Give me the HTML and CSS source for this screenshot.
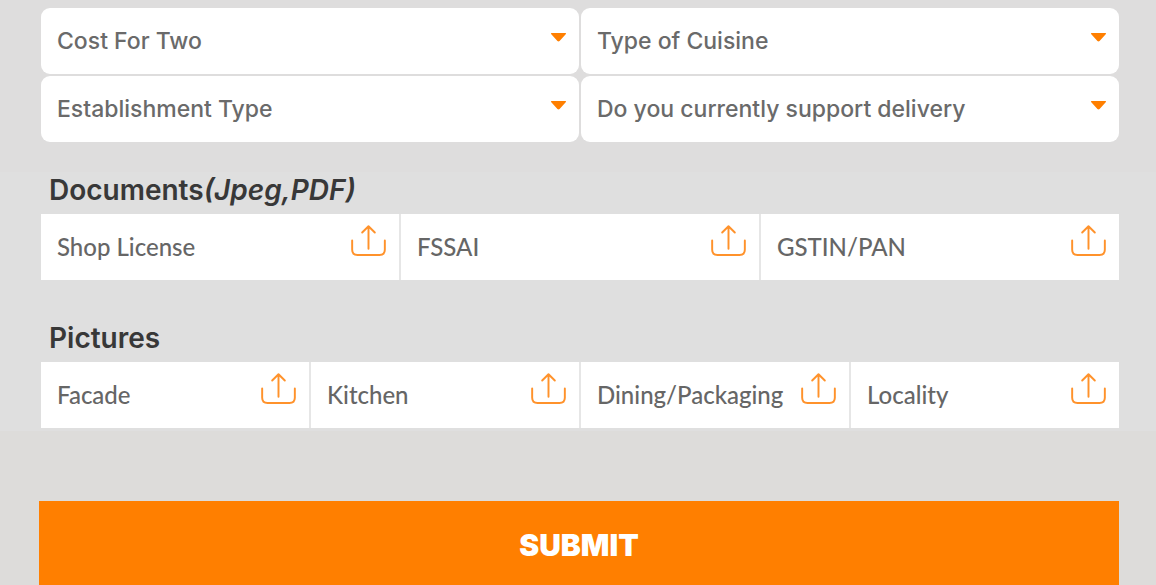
FILE: index.html
```html
<!DOCTYPE html>
<html lang="en">
<head>
<meta charset="utf-8">
<meta name="viewport" content="width=device-width, initial-scale=1">
<title>Restaurant registration</title>
<link rel="stylesheet" href="styles.css">
</head>
<body>
<svg class="sprite" aria-hidden="true">
  <symbol id="upload" viewBox="0 0 36 34">
    <path d="M1.2 16.4V26Q1.2 31.4 6.8 31.4H29.2Q34.8 31.4 34.8 26V16.4" />
    <path d="M18 25V2M11.5 8.3L18 1.8L24.5 8.3" />
  </symbol>
  <symbol id="caret" viewBox="0 0 18 10">
    <path d="M1.2 0H16.8Q18 .4 17 1.4L10.2 9Q9 10 7.8 9L1 1.4Q0 .4 1.2 0Z" />
  </symbol>
</svg>
<form class="form">
  <div class="details">
    <div class="choices">
      <div class="choice">
        <select class="select" aria-label="Cost For Two"><option>Cost For Two</option></select>
        <svg class="caret" aria-hidden="true"><use href="#caret"/></svg>
      </div>
      <div class="choice">
        <select class="select" aria-label="Type of Cuisine"><option>Type of Cuisine</option></select>
        <svg class="caret" aria-hidden="true"><use href="#caret"/></svg>
      </div>
      <div class="choice">
        <select class="select" aria-label="Establishment Type"><option>Establishment Type</option></select>
        <svg class="caret" aria-hidden="true"><use href="#caret"/></svg>
      </div>
      <div class="choice">
        <select class="select" aria-label="Do you currently support delivery"><option>Do you currently support delivery</option></select>
        <svg class="caret" aria-hidden="true"><use href="#caret"/></svg>
      </div>
    </div>
  </div>
  <div class="files">
    <section class="group">
      <h2 class="heading">Documents<em>(Jpeg,PDF)</em></h2>
      <div class="uploads">
        <label class="upload"><span>Shop License</span><input class="file" type="file"><svg class="icon" aria-hidden="true"><use href="#upload"/></svg></label>
        <label class="upload"><span>FSSAI</span><input class="file" type="file"><svg class="icon" aria-hidden="true"><use href="#upload"/></svg></label>
        <label class="upload"><span>GSTIN/PAN</span><input class="file" type="file"><svg class="icon" aria-hidden="true"><use href="#upload"/></svg></label>
      </div>
    </section>
    <section class="group">
      <h2 class="heading">Pictures</h2>
      <div class="uploads">
        <label class="upload"><span>Facade</span><input class="file" type="file"><svg class="icon" aria-hidden="true"><use href="#upload"/></svg></label>
        <label class="upload"><span>Kitchen</span><input class="file" type="file"><svg class="icon" aria-hidden="true"><use href="#upload"/></svg></label>
        <label class="upload"><span>Dining/Packaging</span><input class="file" type="file"><svg class="icon" aria-hidden="true"><use href="#upload"/></svg></label>
        <label class="upload"><span>Locality</span><input class="file" type="file"><svg class="icon" aria-hidden="true"><use href="#upload"/></svg></label>
      </div>
    </section>
  </div>
  <div class="footer">
    <button class="submit" type="button">SUBMIT</button>
  </div>
</form>
</body>
</html>
```
FILE: styles.css
```css
* {
  box-sizing: border-box;
}

body {
  margin: 0;
  background: #dddcda;
  font-family: Inter, "Liberation Sans", sans-serif;
  color: #666;
}

.sprite {
  display: none;
}

.details {
  padding: 8px 37px 30px 41px;
  background: #dedddd;
}

.choices {
  display: grid;
  grid-template-columns: repeat(2, minmax(0, 1fr));
  gap: 2px;
}

.choice {
  position: relative;
}

.select {
  display: block;
  width: 100%;
  height: 66px;
  padding: 0 50px 0 16px;
  border: 0;
  border-radius: 9px;
  appearance: none;
  background: #fff;
  color: #6a6a6a;
  font: 500 23px Inter, "Liberation Sans", sans-serif;
}

.caret {
  position: absolute;
  top: 25px;
  right: 12px;
  width: 17px;
  height: 9px;
  fill: #ff7f00;
  pointer-events: none;
}

.files {
  padding: 0 37px 3px 41px;
  background: #dfdfdf;
}

.group + .group {
  padding-top: 40px;
}

.heading {
  margin: 0 0 6px;
  padding-left: 8px;
  color: #383838;
  font-size: 28px;
  font-weight: 600;
  line-height: 36px;
}

.uploads {
  display: grid;
  grid-auto-columns: minmax(0, 1fr);
  grid-auto-flow: column;
  gap: 2px;
  background: #e6e6e6;
}

.upload {
  display: flex;
  align-items: center;
  justify-content: space-between;
  position: relative;
  height: 66px;
  padding: 0 13px 2px 16px;
  background: #fff;
  color: #666;
  font: 500 24px Lato, "Open Sans", sans-serif;
  cursor: pointer;
}

.file {
  position: absolute;
  inset: 0;
  width: 100%;
  opacity: 0;
}

.icon {
  flex: none;
  width: 35px;
  height: 34px;
  margin-bottom: 10px;
  fill: none;
  stroke: #ff922b;
  stroke-width: 2;
  stroke-linecap: round;
  stroke-linejoin: round;
}

.footer {
  padding: 70px 37px 0 39px;
}

.submit {
  display: block;
  width: 100%;
  height: 84px;
  padding: 4px 0 0;
  border: 0;
  background: #ff7f00;
  color: #fff;
  font: 900 30px Inter, "Liberation Sans", sans-serif;
}
```
